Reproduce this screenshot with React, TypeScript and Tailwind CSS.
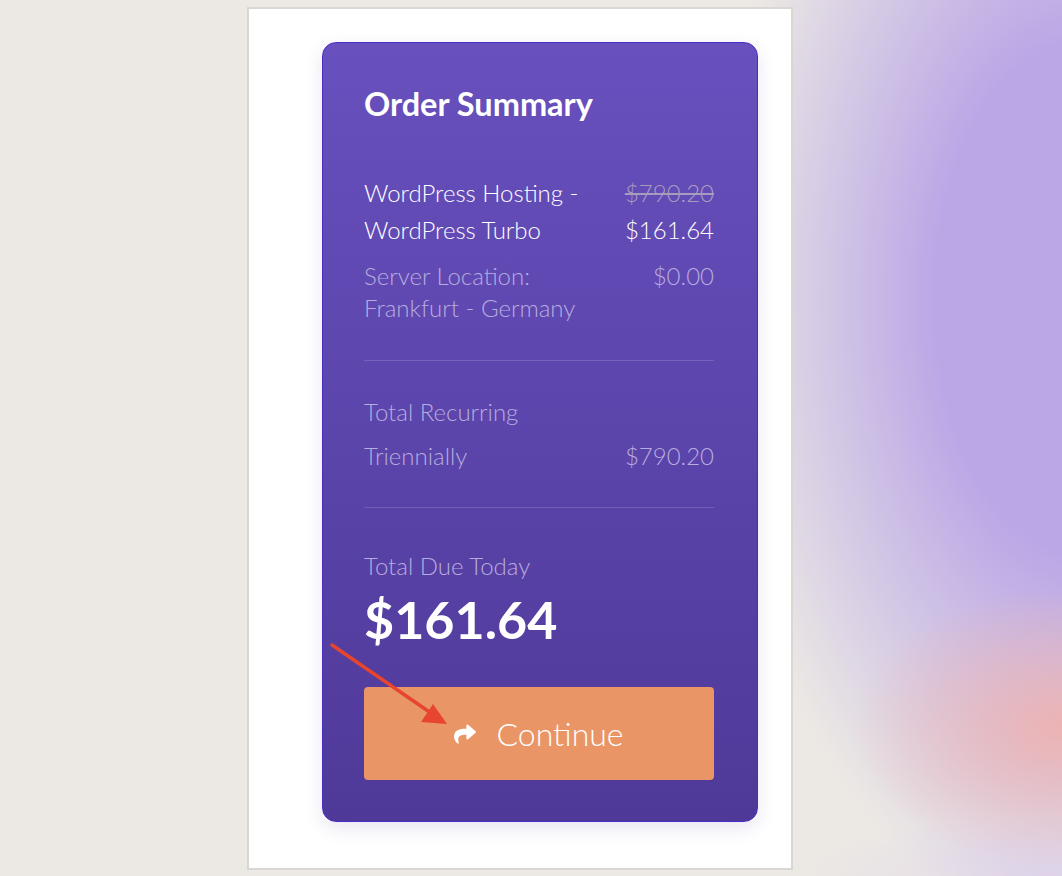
import { FaShare } from 'react-icons/fa'

const font = { fontFamily: 'Lato, "Noto Sans", sans-serif' }

function Row({ left, right, strike, muted }: { left: string[]; right: string[]; strike?: boolean; muted?: boolean }) {
  return (
    <div className={`flex justify-between text-[24px] font-light ${muted ? 'leading-[32px] text-[#b7acdf]' : 'leading-[37px] text-white'}`}>
      <div>
        {left.map(l => (
          <div key={l}>{l}</div>
        ))}
      </div>
      <div className="text-right">
        {right.map((r, i) => (
          <div key={r} className={strike && i === 0 ? 'text-[#a69dbd] line-through' : ''}>
            {r}
          </div>
        ))}
      </div>
    </div>
  )
}

export default function App() {
  return (
    <div
      className="relative h-[876px] w-full overflow-hidden bg-[#ece9e4] bg-[image:radial-gradient(ellipse_210px_140px_at_100%_83%,rgba(238,178,176,0.95),rgba(238,178,176,0)_100%),radial-gradient(ellipse_370px_640px_at_102%_34%,#bba7e6_40%,rgba(187,167,230,0)_100%),radial-gradient(ellipse_240px_60px_at_98%_100%,rgba(225,212,235,0.7),rgba(225,212,235,0))] pt-[7px] pl-[247px]"
      style={font}
    >
      <div className="h-[863px] w-[546px] border-2 border-[#dad6d1] bg-white pt-[33px] pl-[73px]">
        <div className="flex h-[780px] w-[436px] flex-col rounded-[14px] border border-[#4a2cc4] bg-gradient-to-b from-[#6850be] to-[#4f3998] pt-[43px] pr-[43px] pb-[41px] pl-[41px] shadow-[0_6px_18px_rgba(60,40,120,0.12)]">
          <h2 className="text-[32.5px] leading-9 font-bold text-white">Order Summary</h2>

          <div className="mt-[52px]">
            <Row left={['WordPress Hosting -', 'WordPress Turbo']} right={['$790.20', '$161.64']} strike />
          </div>
          <div className="mt-[12px]">
            <Row left={['Server Location:', 'Frankfurt - Germany']} right={['$0.00']} muted />
          </div>

          <div className="mt-[36px] h-px bg-white/15" />

          <div className="mt-[35px] text-[24px] leading-[32px] font-light text-[#b7acdf]">Total Recurring</div>
          <div className="mt-[12px]">
            <Row left={['Triennially']} right={['$790.20']} muted />
          </div>

          <div className="mt-[35px] h-px bg-white/15" />

          <div className="mt-[42px] text-[24px] leading-[32px] font-light text-[#b7acdf]">Total Due Today</div>
          <div className="mt-[6px] text-[52px] leading-[62px] font-bold text-white">$161.64</div>

          <button className="mt-auto flex h-[93px] w-full items-center justify-center gap-5 rounded-[4px] bg-[#e99566] text-[32px] font-light text-white">
            <FaShare className="text-[22px]" />
            Continue
          </button>
        </div>
      </div>

      <svg className="absolute top-0 left-0" width="1062" height="876" viewBox="0 0 1062 876">
        <line x1="332" y1="645" x2="428" y2="711" stroke="#e8452f" strokeWidth="3.5" strokeLinecap="round" />
        <polygon points="447,724 421,722 433,704" fill="#e8452f" />
      </svg>
    </div>
  )
}
